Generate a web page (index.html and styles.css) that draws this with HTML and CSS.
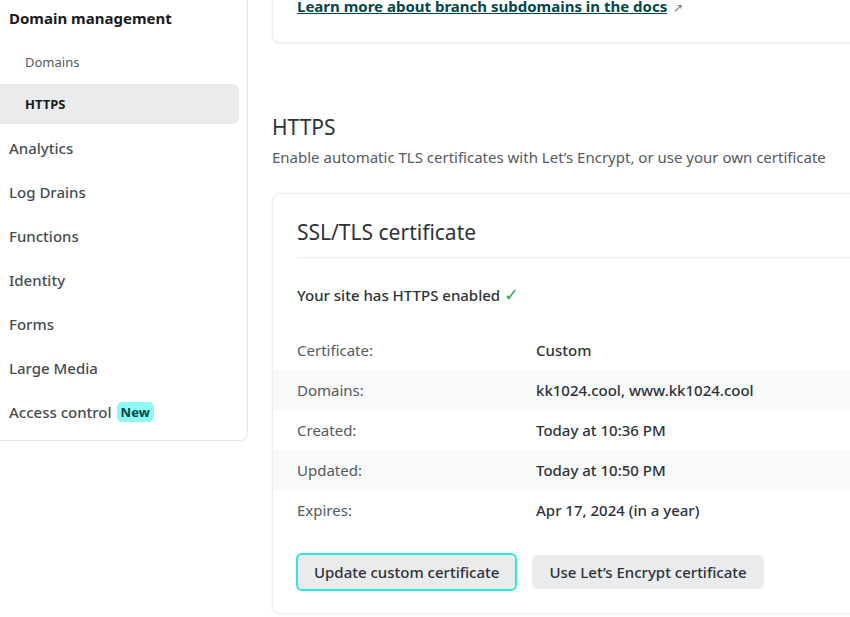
FILE: index.html
```html
<!DOCTYPE html>
<html>
<head>
<meta charset="utf-8">
<link rel="stylesheet" href="styles.css">
</head>
<body>
<div class="page">
  <nav class="sidebar">
    <div class="nav-group">Domain management</div>
    <a class="sub">Domains</a>
    <a class="sub active">HTTPS</a>
    <a class="item">Analytics</a>
    <a class="item">Log Drains</a>
    <a class="item">Functions</a>
    <a class="item">Identity</a>
    <a class="item">Forms</a>
    <a class="item">Large Media</a>
    <a class="item">Access control <span class="badge">New</span></a>
  </nav>
  <main class="main">
    <div class="card top-card">
      <a class="doc-link">Learn more about branch subdomains in the docs</a><span class="ext">↗</span>
    </div>
    <section class="section">
      <h2 class="section-title">HTTPS</h2>
      <p class="section-desc">Enable automatic TLS certificates with Let’s Encrypt, or use your own certificate</p>
      <div class="card cert-card">
        <h3 class="card-title">SSL/TLS certificate</h3>
        <p class="status">Your site has HTTPS enabled <span class="check">✓</span></p>
        <dl class="rows">
          <div class="row"><dt>Certificate:</dt><dd>Custom</dd></div>
          <div class="row alt"><dt>Domains:</dt><dd>kk1024.cool, www.kk1024.cool</dd></div>
          <div class="row"><dt>Created:</dt><dd>Today at 10:36 PM</dd></div>
          <div class="row alt"><dt>Updated:</dt><dd>Today at 10:50 PM</dd></div>
          <div class="row"><dt>Expires:</dt><dd>Apr 17, 2024 (in a year)</dd></div>
        </dl>
        <div class="actions">
          <button class="btn focus">Update custom certificate</button>
          <button class="btn">Use Let’s Encrypt certificate</button>
        </div>
      </div>
    </section>
  </main>
</div>
</body>
</html>
```
FILE: styles.css
```css
* { box-sizing: border-box; }
html, body { margin: 0; padding: 0; }
body {
  background: #fff;
  font-family: "Noto Sans", "Open Sans", sans-serif;
  color: #2d3238;
  overflow: hidden;
  width: 850px;
  height: 617px;
}
.page {
  display: flex;
  align-items: flex-start;
  gap: 24px;
}
.sidebar {
  width: 248px;
  flex: none;
  display: flex;
  flex-direction: column;
  border: 1px solid #e2e4e6;
  border-top: none;
  border-left: none;
  border-bottom-right-radius: 8px;
  padding: 0 8px 8px 0;
}
.nav-group {
  font-size: 15px;
  font-weight: 700;
  color: #181a1c;
  padding: 8px 9px;
  line-height: 20px;
}
.sidebar a {
  display: flex;
  align-items: center;
  height: 40px;
  text-decoration: none;
}
.sub {
  font-size: 13px;
  color: #545a61;
  padding-left: 25px;
  margin-top: 2px;
}
.nav-group + .sub { margin-top: 6px; }
.sub.active {
  background: #e9ebed;
  border-radius: 0 6px 6px 0;
  color: #181a1c;
  font-weight: 700;
}
.item {
  font-size: 15px;
  color: #464c52;
  font-weight: 500;
  padding-left: 9px;
  margin-top: 4px;
}
.badge {
  background: #8ef8f3;
  color: #014847;
  font-weight: 700;
  font-size: 13px;
  border-radius: 5px;
  padding: 0 4px;
  margin-left: 5px;
  line-height: 20px;
}
.main {
  width: 640px;
  flex: none;
  margin-top: -17px;
}
.card {
  background: #fff;
  border: 1px solid #eceeef;
  border-radius: 8px;
  box-shadow: 0 1px 3px rgba(0,0,0,0.06);
}
.top-card {
  padding: 12px 24px 25px;
  border-top-left-radius: 0;
  border-top-right-radius: 0;
  border-top: none;
}
.doc-link {
  font-size: 15px;
  font-weight: 700;
  color: #014847;
  text-decoration: underline;
}
.ext {
  color: #777;
  font-size: 12px;
  margin-left: 6px;
}
.section { margin-top: 70px; }
.section-title {
  margin: 0;
  font-size: 21px;
  font-weight: 400;
  color: #2d3238;
  line-height: 28px;
}
.section-desc {
  margin: 6px 0 0;
  font-size: 15px;
  color: #545a61;
  line-height: 20px;
}
.cert-card {
  margin-top: 26px;
  padding: 23px 0 22px 0;
}
.card-title {
  margin: 0 0 0 24px;
  font-size: 21px;
  font-weight: 400;
  line-height: 30px;
  padding-bottom: 10px;
  border-bottom: 1px solid #eceeef;
}
.status {
  margin: 26px 0 0 24px;
  font-size: 15px;
  font-weight: 500;
  line-height: 20px;
}
.check { color: #2fa84f; font-size: 18px; }
.rows { margin: 25px 0 0; }
.row {
  display: flex;
  align-items: center;
  height: 40px;
  padding-left: 24px;
}
.row.alt { background: #f8f9f9; }
.row dt {
  width: 239px;
  font-size: 15px;
  color: #545a61;
}
.row dd {
  margin: 0;
  font-size: 15px;
  font-weight: 500;
  color: #2d3238;
}
.actions {
  display: flex;
  gap: 15px;
  align-items: center;
  padding-left: 23px;
  margin-top: 23px;
}
.btn {
  font-family: inherit;
  font-size: 15px;
  font-weight: 500;
  color: #2d3238;
  background: #e9ebed;
  border: none;
  border-radius: 6px;
  height: 34px;
  padding: 0 17px;
}
.btn.focus {
  height: 38px;
  padding: 0 16px;
  border: 2px solid #30e6e2;
}
```
